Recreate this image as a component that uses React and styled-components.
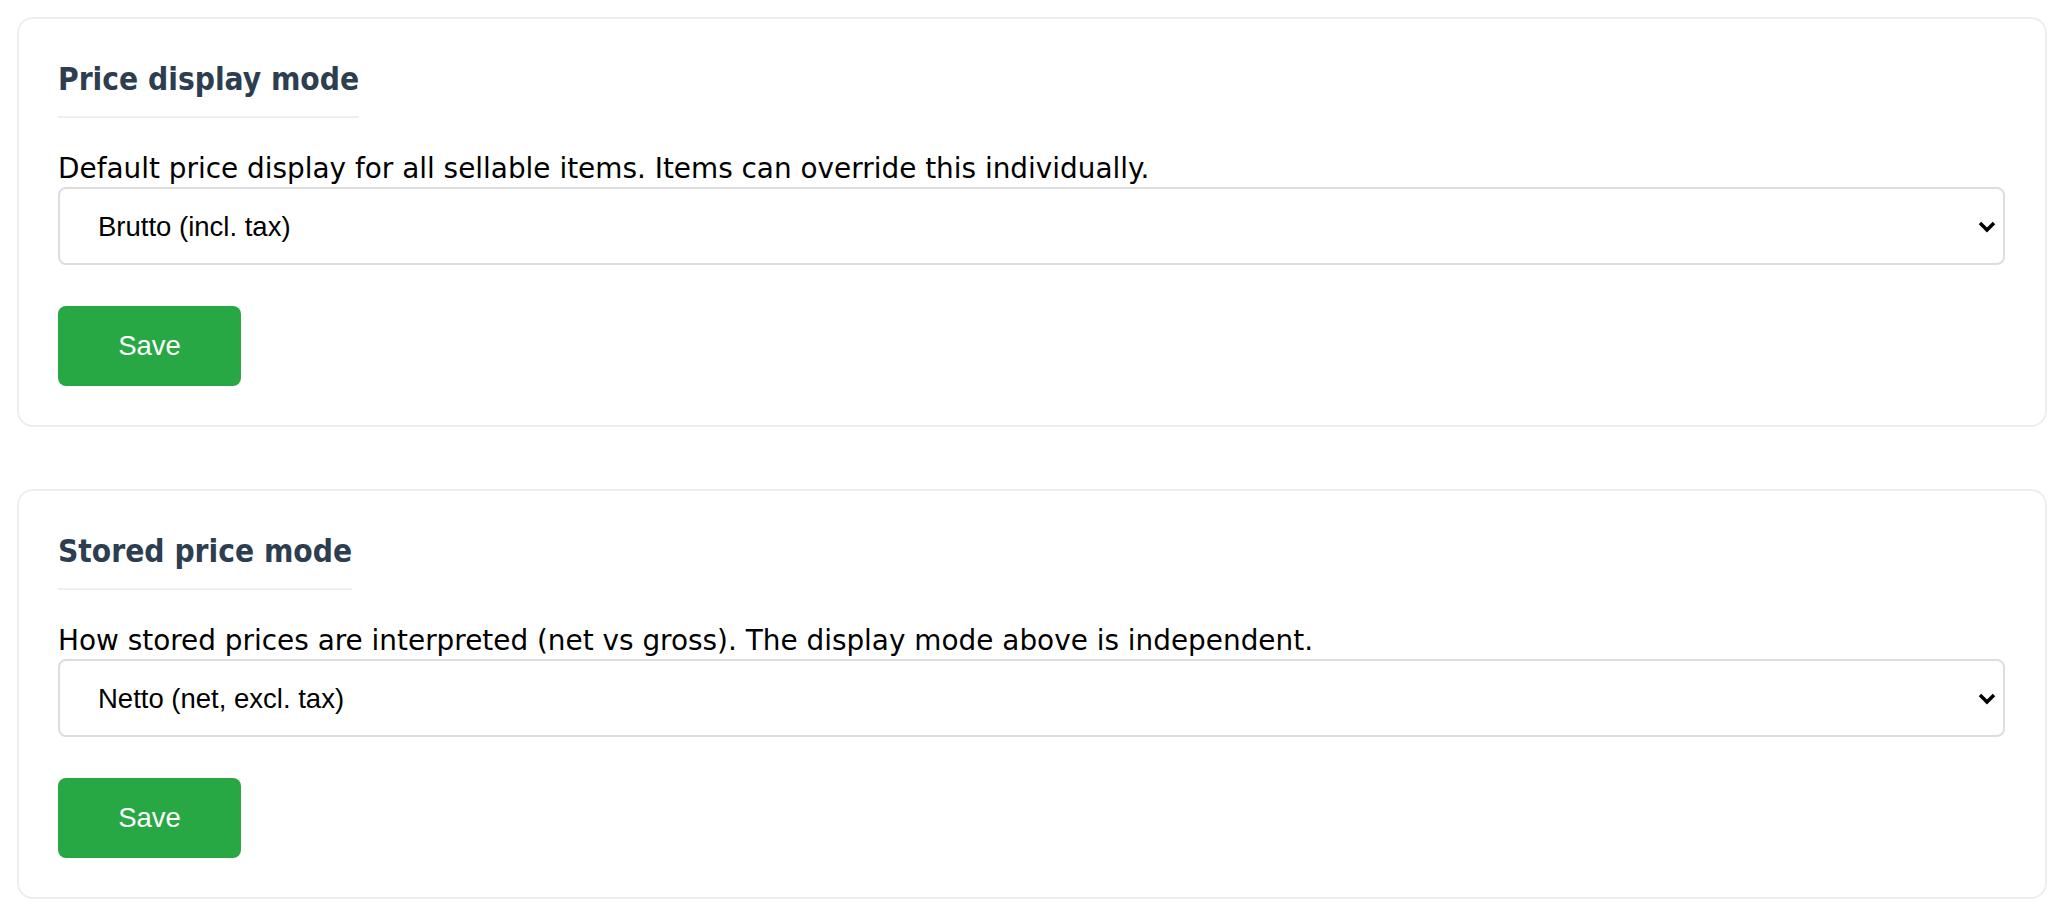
import React from "react";
import styled, { createGlobalStyle } from "styled-components";

const GlobalStyle = createGlobalStyle`
  html, body { margin: 0; padding: 0; background: #ffffff; }
  body { font-family: "DejaVu Sans", Verdana, sans-serif; }
`;

const Page = styled.div`
  padding: 17px;
  display: flex;
  flex-direction: column;
  gap: 62px;
`;

const Card = styled.section`
  border: 2px solid #eeeeee;
  border-radius: 16px;
  padding: 39px 40px 39px 39px;
  display: flex;
  flex-direction: column;
  align-items: flex-start;
  background: #fff;
`;

const Heading = styled.h3`
  margin: 0 0 35px 0;
  font-family: "DejaVu Sans Condensed", "DejaVu Sans", sans-serif;
  font-weight: bold;
  font-size: 31.4px;
  line-height: 42px;
  color: #2c3e50;
  padding-bottom: 16px;
  border-bottom: 2px solid #eeeeee;
`;

const Description = styled.label`
  display: block;
  font-family: "DejaVu Sans", Verdana, sans-serif;
  font-size: 27.9px;
  line-height: 32px;
  color: #000;
  margin-bottom: 2px;
`;

const SelectWrap = styled.div`
  position: relative;
  align-self: stretch;
`;

const Select = styled.select`
  appearance: none;
  -webkit-appearance: none;
  width: 100%;
  height: 78px;
  border: 2px solid #dddddd;
  border-radius: 8px;
  background: #fff;
  padding: 0 60px 0 38px;
  font-family: "Liberation Sans", Arial, sans-serif;
  font-size: 27.5px;
  color: #000;
  outline: none;
`;

const Chevron = styled.svg`
  position: absolute;
  right: 9px;
  top: 34px;
  width: 18px;
  height: 12px;
  pointer-events: none;
`;

const SaveButton = styled.button`
  margin-top: 41px;
  width: 183px;
  height: 80px;
  border: none;
  border-radius: 8px;
  background: #28a745;
  color: #fff;
  font-family: "Liberation Sans", Arial, sans-serif;
  font-size: 27.5px;
  cursor: pointer;
`;

function SettingCard({ title, description, options, value }) {
  return (
    <Card>
      <Heading>{title}</Heading>
      <Description>{description}</Description>
      <SelectWrap>
        <Select defaultValue={value}>
          {options.map((o) => (
            <option key={o.value} value={o.value}>{o.label}</option>
          ))}
        </Select>
        <Chevron viewBox="0 0 18 12">
          <path d="M2 2 L9 9 L16 2" fill="none" stroke="#000" strokeWidth="3.5" />
        </Chevron>
      </SelectWrap>
      <SaveButton>Save</SaveButton>
    </Card>
  );
}

export default function App() {
  return (
    <>
      <GlobalStyle />
      <Page>
        <SettingCard
          title="Price display mode"
          description="Default price display for all sellable items. Items can override this individually."
          options={[
            { value: "gross", label: "Brutto (incl. tax)" },
            { value: "net", label: "Netto (excl. tax)" },
          ]}
          value="gross"
        />
        <SettingCard
          title="Stored price mode"
          description="How stored prices are interpreted (net vs gross). The display mode above is independent."
          options={[
            { value: "net", label: "Netto (net, excl. tax)" },
            { value: "gross", label: "Brutto (gross, incl. tax)" },
          ]}
          value="net"
        />
      </Page>
    </>
  );
}
